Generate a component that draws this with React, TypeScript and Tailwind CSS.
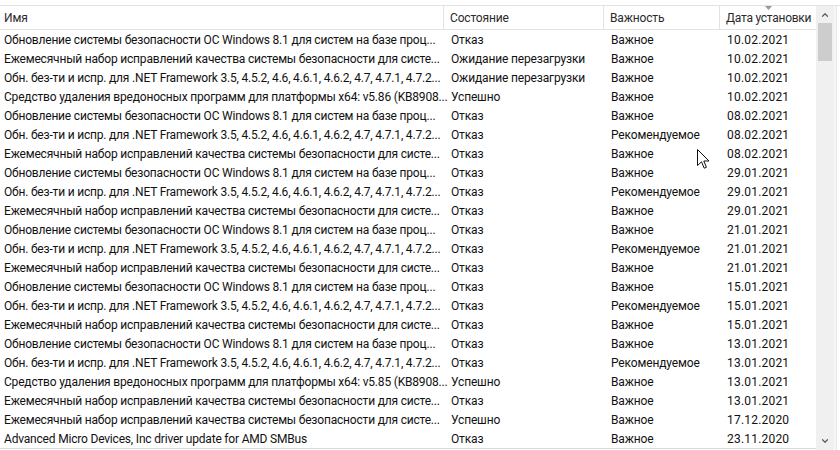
import { ChevronUp, ChevronDown } from "lucide-react"

interface UpdateRow {
  name: string
  status: string
  importance: string
  date: string
}

const sec81 = "Обновление системы безопасности ОС Windows 8.1 для систем на базе проц..."
const monthly = "Ежемесячный набор исправлений качества системы безопасности для систе..."
const net = "Обн. без-ти и испр. для .NET Framework 3.5, 4.5.2, 4.6, 4.6.1, 4.6.2, 4.7, 4.7.1, 4.7.2..."

const rows: UpdateRow[] = [
  { name: sec81, status: "Отказ", importance: "Важное", date: "10.02.2021" },
  { name: monthly, status: "Ожидание перезагрузки", importance: "Важное", date: "10.02.2021" },
  { name: net, status: "Ожидание перезагрузки", importance: "Важное", date: "10.02.2021" },
  { name: "Средство удаления вредоносных программ для платформы x64: v5.86 (KB8908...", status: "Успешно", importance: "Важное", date: "10.02.2021" },
  { name: sec81, status: "Отказ", importance: "Важное", date: "08.02.2021" },
  { name: net, status: "Отказ", importance: "Рекомендуемое", date: "08.02.2021" },
  { name: monthly, status: "Отказ", importance: "Важное", date: "08.02.2021" },
  { name: sec81, status: "Отказ", importance: "Важное", date: "29.01.2021" },
  { name: net, status: "Отказ", importance: "Рекомендуемое", date: "29.01.2021" },
  { name: monthly, status: "Отказ", importance: "Важное", date: "29.01.2021" },
  { name: sec81, status: "Отказ", importance: "Важное", date: "21.01.2021" },
  { name: net, status: "Отказ", importance: "Рекомендуемое", date: "21.01.2021" },
  { name: monthly, status: "Отказ", importance: "Важное", date: "21.01.2021" },
  { name: sec81, status: "Отказ", importance: "Важное", date: "15.01.2021" },
  { name: net, status: "Отказ", importance: "Рекомендуемое", date: "15.01.2021" },
  { name: monthly, status: "Отказ", importance: "Важное", date: "15.01.2021" },
  { name: sec81, status: "Отказ", importance: "Важное", date: "13.01.2021" },
  { name: net, status: "Отказ", importance: "Рекомендуемое", date: "13.01.2021" },
  { name: "Средство удаления вредоносных программ для платформы x64: v5.85 (KB8908...", status: "Успешно", importance: "Важное", date: "13.01.2021" },
  { name: monthly, status: "Отказ", importance: "Важное", date: "13.01.2021" },
  { name: monthly, status: "Успешно", importance: "Важное", date: "17.12.2020" },
  { name: "Advanced Micro Devices, Inc driver update for AMD SMBus", status: "Отказ", importance: "Важное", date: "23.11.2020" },
]

export default function App() {
  return (
    <div className="relative w-[840px] h-[450px] overflow-hidden bg-white text-[12px] tracking-[-0.15px] text-[#111] font-['Roboto','Noto_Sans',sans-serif]">
      <div className="h-[5px]" />
      <div className="flex h-[445px] border-t border-[#e3e3e3]">
        {/* list */}
        <div className="w-[816px] flex flex-col">
          <div className="grid grid-cols-[444px_160px_116px_96px] h-[24px] border-b border-[#e3e3e3] text-[#2a2a2a]">
            <div className="flex items-center pl-[4px] pt-[1px] border-r border-[#e3e3e3]">Имя</div>
            <div className="flex items-center pl-[6px] pt-[1px] border-r border-[#e3e3e3]">Состояние</div>
            <div className="flex items-center pl-[6px] pt-[1px] border-r border-[#e3e3e3]">Важность</div>
            <div className="relative flex items-center pl-[6px] pt-[1px] whitespace-nowrap tracking-[-0.25px]">
              Дата установки
              <svg className="absolute left-[45px] top-[0px]" width="7" height="4" viewBox="0 0 7 4">
                <path d="M0 0 L7 0 L3.5 4 Z" fill="#9a9a9a" />
              </svg>
            </div>
          </div>
          <div className="flex-1 flex flex-col">
            {rows.map((r, i) => (
              <div key={i} className="grid grid-cols-[444px_160px_116px_96px] h-[19px] leading-[17px]">
                <div className="pl-[4px] pt-[2px] whitespace-nowrap tracking-[-0.19px]">{r.name}</div>
                <div className="pl-[7px] pt-[2px] whitespace-nowrap">{r.status}</div>
                <div className="pl-[7px] pt-[2px] whitespace-nowrap">{r.importance}</div>
                <div className="pl-[7px] pt-[2px] whitespace-nowrap tracking-[0.2px]">{r.date}</div>
              </div>
            ))}
          </div>
          <div className="h-[2px] border-t border-[#d9d9d9]" />
        </div>
        {/* scrollbar */}
        <div className="w-[18px] bg-[#f0f0f0] flex flex-col items-center">
          <div className="h-[17px] flex items-center justify-center">
            <ChevronUp size={10} strokeWidth={3} color="#606060" />
          </div>
          <div className="w-[14px] h-[38px] bg-[#cdcdcd]" />
          <div className="flex-1" />
          <div className="h-[18px] flex items-center justify-center">
            <ChevronDown size={10} strokeWidth={3} color="#606060" />
          </div>
        </div>
        <div className="w-[3px] bg-[#f7f7f7] border-r border-[#e6e6e6]" />
      </div>
      {/* mouse cursor */}
      <svg className="absolute left-[697px] top-[149px]" width="13" height="21" viewBox="0 0 13 21">
        <path d="M0.5 0.5 L0.5 16.5 L4.5 12.8 L7.2 19.2 L9.4 18.3 L6.8 12 L12 12 Z" fill="#fff" stroke="#111" strokeWidth="1" strokeLinejoin="miter" />
      </svg>
    </div>
  )
}
